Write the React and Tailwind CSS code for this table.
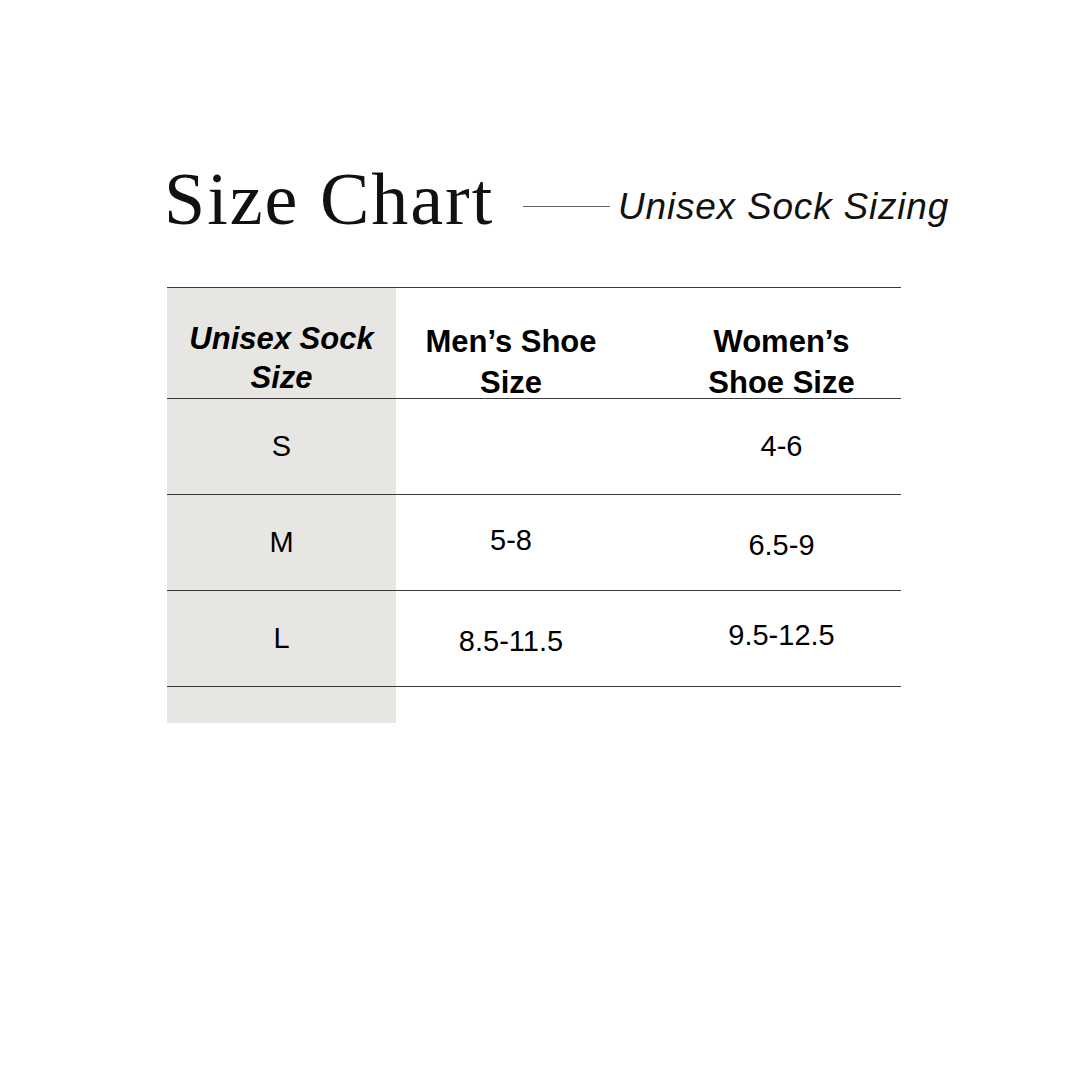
export default function App() {
  return (
    <div className="w-[1080px] h-[1080px] bg-white">
      <div className="flex items-start pt-[162px] pl-[164px]">
        <div
          className="w-[359px] text-[74px] leading-[74px] tracking-[2px] text-[#111]"
          style={{ fontFamily: '"Liberation Serif", serif' }}
        >
          Size Chart
        </div>
        <div className="w-[87px] h-px bg-[#666] mt-[44px]" />
        <div
          className="ml-[8px] mt-[26px] italic text-[37px] leading-[37px] tracking-[0.8px] text-[#111]"
          style={{ fontFamily: '"Liberation Sans", sans-serif' }}
        >
          Unisex Sock Sizing
        </div>
      </div>

      <div
        className="ml-[167px] mt-[51px] w-[734px] border-t border-[#3a3a3a] text-black"
        style={{ fontFamily: '"Liberation Sans", sans-serif' }}
      >
        <div className="grid grid-cols-[229px_230px_275px] h-[111px] border-b border-[#3a3a3a] overflow-hidden">
          <div className="bg-[#e8e6e2] pt-[31px] text-center font-bold italic text-[31px] leading-[39px]">
            Unisex Sock
            <br />
            Size
          </div>
          <div className="pt-[33px] text-center font-bold text-[31px] leading-[41px]">
            Men’s Shoe
            <br />
            Size
          </div>
          <div className="pt-[33px] pl-[36px] text-center font-bold text-[31px] leading-[41px]">
            Women’s
            <br />
            Shoe Size
          </div>
        </div>

        {[
          { s: "S", m: "", w: "4-6", mo: 0, wo: 0 },
          { s: "M", m: "5-8", w: "6.5-9", mo: -2, wo: 3 },
          { s: "L", m: "8.5-11.5", w: "9.5-12.5", mo: 3, wo: -3 },
        ].map((r) => (
          <div
            key={r.s}
            className="grid grid-cols-[229px_230px_275px] h-[96px] border-b border-[#3a3a3a] text-[29px]"
          >
            <div className="bg-[#e8e6e2] flex items-center justify-center">{r.s}</div>
            <div className="flex items-center justify-center">
              <span style={{ transform: `translateY(${r.mo}px)` }}>{r.m}</span>
            </div>
            <div className="flex items-center justify-center pl-[36px]">
              <span style={{ transform: `translateY(${r.wo}px)` }}>{r.w}</span>
            </div>
          </div>
        ))}
        <div className="w-[229px] h-[36px] bg-[#e8e6e2]" />
      </div>
    </div>
  );
}
